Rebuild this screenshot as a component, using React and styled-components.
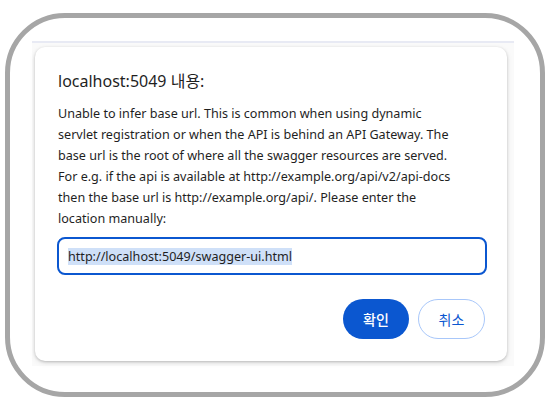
import React from 'react';
import styled, { createGlobalStyle } from 'styled-components';

const GlobalStyle = createGlobalStyle`
  body {
    margin: 0;
    background: #ffffff;
    font-family: "Noto Sans", "Noto Sans CJK KR", sans-serif;
  }
`;

const Frame = styled.div`
  box-sizing: border-box;
  width: 540px;
  height: 384px;
  margin: 13px 0 0 5px;
  border: 5px solid #a6a6a6;
  border-radius: 60px;
  padding: 23px 0 0 22px;
`;

const Page = styled.div`
  box-sizing: border-box;
  width: 482px;
  height: 325px;
  border-top: 2px solid #e8eaf4;
  background: #fafafa;
  padding: 4px 0 0 3px;
`;

const Card = styled.div`
  box-sizing: border-box;
  width: 472px;
  height: 314px;
  background: #ffffff;
  border-radius: 10px;
  box-shadow: 0 1px 3px rgba(0, 0, 0, 0.22), 0 2px 6px rgba(0, 0, 0, 0.08);
  padding: 23px 22px 0 23px;
  display: flex;
  flex-direction: column;
`;

const Title = styled.h1`
  margin: 0;
  font-size: 16px;
  font-weight: 400;
  line-height: 22px;
  color: #1f1f1f;
  font-family: "Noto Sans", "Noto Sans CJK KR", sans-serif;
`;

const Message = styled.p`
  margin: 11px 0 0;
  font-size: 12.6px;
  line-height: 21px;
  color: #1f1f1f;
  white-space: nowrap;
`;

const Selected = styled.div`
  box-sizing: border-box;
  margin: 8px 0 0 -1px;
  width: 430px;
  height: 38px;
  border: 2px solid #0b57d0;
  border-radius: 8px;
  padding: 0 9px;
  display: flex;
  align-items: center;
  font-size: 12.6px;
  color: #1f1f1f;

  span {
    background: #cfe0f8;
    line-height: 17px;
  }
`;

const Actions = styled.div`
  display: flex;
  justify-content: flex-end;
  gap: 9px;
  margin-top: 24px;
`;

const Button = styled.button`
  box-sizing: border-box;
  height: 40px;
  width: ${p => p.$w}px;
  border-radius: 20px;
  font-family: "Noto Sans CJK KR", sans-serif;
  font-size: 14px;
  font-weight: ${p => (p.$primary ? 500 : 400)};
  cursor: pointer;
  background: ${p => (p.$primary ? '#0b57d0' : '#ffffff')};
  color: ${p => (p.$primary ? '#ffffff' : '#0b57d0')};
  border: ${p => (p.$primary ? 'none' : '1px solid #a8c7fa')};
`;

const App = () => (
  <>
    <GlobalStyle />
    <Frame>
      <Page>
        <Card>
          <Title>localhost:5049 내용:</Title>
          <Message>
            Unable to infer base url. This is common when using dynamic
            <br />
            servlet registration or when the API is behind an API Gateway. The
            <br />
            base url is the root of where all the swagger resources are served.
            <br />
            For e.g. if the api is available at http://example.org/api/v2/api-docs
            <br />
            then the base url is http://example.org/api/. Please enter the
            <br />
            location manually:
          </Message>
          <Selected>
            <span>http://localhost:5049/swagger-ui.html</span>
          </Selected>
          <Actions>
            <Button $primary $w={66}>확인</Button>
            <Button $w={67}>취소</Button>
          </Actions>
        </Card>
      </Page>
    </Frame>
  </>
);

export default App;
